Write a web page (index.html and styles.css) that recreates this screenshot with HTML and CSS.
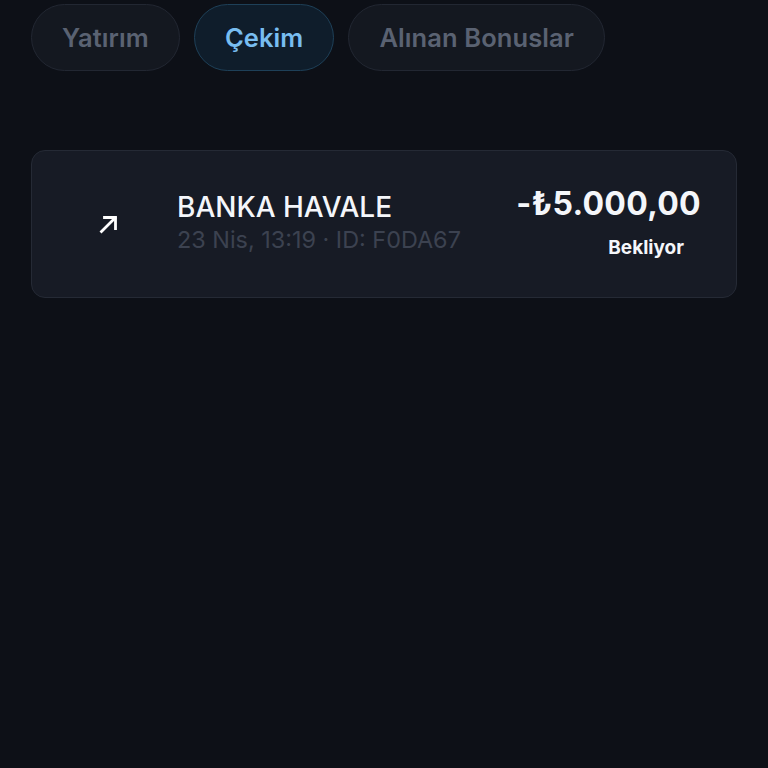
FILE: index.html
```html
<!DOCTYPE html>
<html lang="tr">
<head>
<meta charset="utf-8">
<link rel="stylesheet" href="styles.css">
</head>
<body>
<div class="page">
  <nav class="tabs">
    <button class="tab">Yatırım</button>
    <button class="tab active">Çekim</button>
    <button class="tab">Alınan Bonuslar</button>
  </nav>
  <div class="list">
    <div class="card">
      <div class="icon">
        <svg width="24" height="24" viewBox="0 0 24 24" fill="none" stroke="#ffffff" stroke-width="2.8" stroke-linecap="square">
          <path d="M4.5 19.5 L18 6"/>
          <path d="M7.5 5.5 H18.5 V16.5"/>
        </svg>
      </div>
      <div class="info">
        <div class="title">BANKA HAVALE</div>
        <div class="meta">23 Nis, 13:19 · ID: F0DA67</div>
      </div>
      <div class="right">
        <div class="amount">-₺5.000,00</div>
        <div class="status">Bekliyor</div>
      </div>
    </div>
  </div>
</div>
</body>
</html>
```
FILE: styles.css
```css
* { box-sizing: border-box; }
html, body {
  margin: 0;
  background: #0d1017;
  height: 100%;
}
body {
  font-family: Inter, "Noto Sans", sans-serif;
  color: #fff;
}
.page {
  padding: 4px 31px 0 31px;
}
.tabs {
  display: flex;
  gap: 14px;
}
.tab {
  height: 67px;
  padding: 0 30px;
  border-radius: 34px;
  background: #141820;
  border: 1.5px solid #222732;
  color: #5a6272;
  font-family: Inter, sans-serif;
  font-size: 25.5px;
  font-weight: 600;
  letter-spacing: 0.1px;
}
.tab.active {
  background: #0f1d2b;
  border-color: #1e4058;
  color: #78bdf0;
}
.list {
  margin-top: 79px;
}
.card {
  height: 148px;
  display: flex;
  align-items: center;
  border-radius: 14px;
  background: #171b25;
  border: 1.5px solid #252a35;
  padding: 0 35px 0 49px;
}
.icon {
  width: 56px;
  height: 56px;
  display: flex;
  align-items: center;
  justify-content: center;
  margin-right: 40px;
  flex: none;
}
.info {
  flex: 1;
  display: flex;
  flex-direction: column;
  gap: 2px;
  margin-top: -4px;
}
.title {
  font-size: 28px;
  font-weight: 500;
  line-height: 34px;
  color: #f4f6fa;
}
.meta {
  font-size: 23.4px;
  line-height: 28px;
  color: #3c4250;
}
.right {
  display: flex;
  flex-direction: column;
  align-items: flex-end;
  gap: 14px;
  margin-top: -4px;
}
.amount {
  font-size: 32px;
  font-weight: 700;
  line-height: 36px;
  color: #f4f6fa;
  letter-spacing: 0.3px;
}
.status {
  font-size: 19px;
  font-weight: 700;
  color: #f4f6fa;
  margin-right: 17px;
}
```
